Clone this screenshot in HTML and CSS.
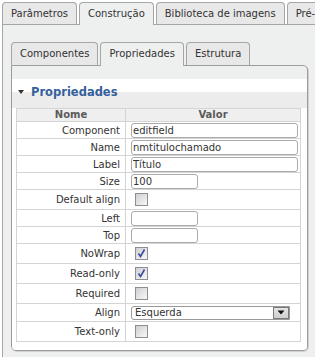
FILE: index.html
```html
<!DOCTYPE html>
<html lang="pt">
<head>
  <meta charset="UTF-8">
  <title>Propriedades</title>
  <link rel="stylesheet" href="styles.css">
</head>
<body>
  <div class="tabs">
    <ul class="tab-bar">
      <li>Parâmetros</li>
      <li class="active">Construção</li>
      <li>Biblioteca de imagens</li>
      <li>Pré-visualização</li>
    </ul>
    <div class="tab-panel">
      <ul class="tab-bar inner">
        <li>Componentes</li>
        <li class="active">Propriedades</li>
        <li>Estrutura</li>
      </ul>
      <div class="sub-panel">
        <div class="box">
          <div class="box-title"><span class="arrow"></span>Propriedades</div>
          <table class="props">
            <tr class="head"><th>Nome</th><th>Valor</th></tr>
            <tr class="t"><td class="label">Component</td><td><input class="field" type="text" value="editfield"></td></tr>
            <tr class="t"><td class="label">Name</td><td><input class="field" type="text" value="nmtitulochamado"></td></tr>
            <tr class="t"><td class="label">Label</td><td><input class="field" type="text" value="Título"></td></tr>
            <tr class="t"><td class="label">Size</td><td><input class="field short" type="text" value="100"></td></tr>
            <tr class="c"><td class="label">Default align</td><td><span class="check"></span></td></tr>
            <tr class="t"><td class="label">Left</td><td><input class="field short" type="text" value=""></td></tr>
            <tr class="t"><td class="label">Top</td><td><input class="field short" type="text" value=""></td></tr>
            <tr class="c"><td class="label">NoWrap</td><td><span class="check"><svg width="11" height="11" viewBox="0 0 11 11"><path d="M2.5 5.5 L4.5 8.5 L8.5 1.5" fill="none" stroke="#3a4a9e" stroke-width="1.6"/></svg></span></td></tr>
            <tr class="c"><td class="label">Read-only</td><td><span class="check"><svg width="11" height="11" viewBox="0 0 11 11"><path d="M2.5 5.5 L4.5 8.5 L8.5 1.5" fill="none" stroke="#3a4a9e" stroke-width="1.6"/></svg></span></td></tr>
            <tr class="c"><td class="label">Required</td><td><span class="check"></span></td></tr>
            <tr class="s"><td class="label">Align</td><td>
              <div class="select"><span class="select-text">Esquerda</span><span class="select-btn"><svg width="8" height="5" viewBox="0 0 8 5"><path d="M0.5 0.5 H7.5 L4 4.5 Z" fill="#111"/></svg></span></div>
            </td></tr>
            <tr class="c"><td class="label">Text-only</td><td><span class="check"></span></td></tr>
          </table>
        </div>
      </div>
    </div>
  </div>
</body>
</html>
```

FILE: styles.css
```css
html, body {
  margin: 0;
  overflow: hidden;
}
body {
  font-family: "DejaVu Sans", Verdana, sans-serif;
  font-size: 10px;
  color: #333;
  background: #fff;
}
.tabs {
  margin: 2px 0 0 2px;
}
.tab-bar {
  display: flex;
  gap: 2px;
  list-style: none;
  margin: 0;
  padding: 0;
}
.tab-bar li {
  flex-shrink: 0;
  height: 21px;
  line-height: 21px;
  padding: 0 8px;
  border: 1px solid #a6a6a6;
  border-bottom: none;
  border-radius: 4px 4px 0 0;
  background: #e8e8e8;
  color: #333;
  white-space: nowrap;
}
.tab-bar li.active {
  background: #eef0f0;
  height: 22px;
  margin-bottom: -1px;
}
.tab-bar.inner li {
  height: 22px;
  line-height: 22px;
}
.tab-bar.inner li.active {
  height: 23px;
}
.tab-panel {
  width: 400px;
  height: 400px;
  border: 1px solid #a6a6a6;
  border-right: none;
  background: #eef0f0;
  padding: 17px 0 0 8px;
}
.sub-panel {
  width: 295px;
  border: 1px solid #9c9c9c;
  border-radius: 0 5px 5px 5px;
  background: #eef0f0;
  padding-top: 13px;
  box-shadow: 1px 1px 0 #d2d2d2;
}
.box {
  background: #fff;
  padding-bottom: 8px;
  border-radius: 0 0 4px 4px;
}
.box-title {
  box-sizing: border-box;
  height: 29px;
  padding: 5px 0 0 6px;
  line-height: 16px;
  font-size: 11.5px;
  font-weight: bold;
  color: #34609c;
  background: linear-gradient(#fff 13px, #ececec 13px);
}
.arrow {
  display: inline-block;
  vertical-align: middle;
  margin: -2px 7px 0 0;
  border-top: 4px solid #333;
  border-left: 3.5px solid transparent;
  border-right: 3.5px solid transparent;
}
.props {
  border-collapse: collapse;
  width: 285px;
  margin-left: 4px;
}
.props th, .props td {
  border: 1px solid #d4d4d4;
  padding: 0 0 0 5px;
}
.props th {
  height: 12px;
  line-height: 12px;
  padding: 0;
  background: #efefef;
  color: #5a5a5a;
  font-weight: bold;
}
.props .label {
  width: 103px;
  text-align: right;
  padding: 0 5px 0 0;
}
.props tr.t td {
  height: 16px;
}
.props tr.c td {
  height: 19px;
}
.props tr.s td {
  height: 17px;
}
.field {
  display: block;
  box-sizing: border-box;
  width: 167px;
  height: 15px;
  margin: 0;
  padding: 0 1px;
  border: 1px solid #ababab;
  border-radius: 3px;
  font: inherit;
  line-height: 13px;
  color: #333;
  background: #fff;
}
.field.short {
  width: 67px;
}
.check {
  display: block;
  width: 11px;
  height: 11px;
  margin-left: 4px;
  border: 1px solid #8d8d96;
  background: linear-gradient(135deg, #cfcfd2, #f8f8f8);
}
.check svg {
  display: block;
}
.select {
  display: flex;
  box-sizing: border-box;
  width: 159px;
  height: 14px;
  border: 1px solid #999;
  border-radius: 3px 0 0 3px;
  background: #fff;
}
.select-text {
  flex: 1;
  padding-left: 3px;
  line-height: 12px;
}
.select-btn {
  display: flex;
  align-items: center;
  justify-content: center;
  box-sizing: border-box;
  width: 16px;
  border: 1px solid #7a7a7a;
  background: linear-gradient(#e4e4e4, #cfcfcf);
}
```
